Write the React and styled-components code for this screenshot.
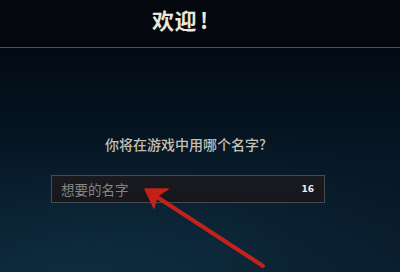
import React from "react";
import styled, { createGlobalStyle } from "styled-components";

const Global = createGlobalStyle`
  html, body { margin: 0; padding: 0; background: #05070f; }
  body { font-family: "Noto Sans CJK SC", "Noto Sans", sans-serif; }
  #root { width: 400px; height: 272px; overflow: hidden; }
`;

const Screen = styled.div`
  position: relative;
  width: 400px;
  height: 272px;
  display: flex;
  flex-direction: column;
  overflow: hidden;
`;

const Header = styled.header`
  height: 47px;
  flex: none;
  display: flex;
  align-items: center;
  padding-left: 152px;
  background: #05070f;
  border-bottom: 1px solid #4d5053;
  box-sizing: content-box;
`;

const Title = styled.h1`
  margin: 0;
  margin-top: -10px;
  font-size: 22px;
  line-height: 26px;
  font-weight: 700;
  color: #ece7da;
  letter-spacing: 0.5px;
`;

const Bang = styled.span`
  margin-left: 3px;
`;

const Main = styled.main`
  flex: 1;
  display: flex;
  flex-direction: column;
  padding: 86px 0 0 51px;
  background:
    radial-gradient(ellipse 35px 4px at 45px 229px, rgba(90, 140, 170, 0.28), transparent 100%),
    radial-gradient(ellipse 240px 150px at 60px 240px, rgba(18, 58, 80, 0.55), transparent 100%),
    radial-gradient(ellipse 200px 120px at 230px 200px, rgba(16, 50, 70, 0.35), transparent 100%),
    linear-gradient(180deg, #030b15 0%, #061725 50%, #0a1e2e 100%);
`;

const Question = styled.p`
  margin: 0 0 21px 54px;
  font-size: 14px;
  line-height: 20px;
  font-weight: 500;
  color: #c3c1b6;
`;

const Field = styled.label`
  width: 274px;
  height: 28px;
  box-sizing: border-box;
  display: flex;
  align-items: center;
  justify-content: space-between;
  padding: 0 10px 0 9px;
  border: 1px solid #464b50;
  background: linear-gradient(180deg, #1a1b21 0%, #15171c 100%);
`;

const Placeholder = styled.span`
  font-size: 13.5px;
  line-height: 18px;
  color: #858683;
`;

const Counter = styled.span`
  font-family: "DejaVu Sans", "Noto Sans", sans-serif;
  font-size: 9px;
  font-weight: 700;
  color: #ececec;
`;

const Annotation = styled.svg`
  position: absolute;
  left: 0;
  top: 0;
  pointer-events: none;
`;

export default function App() {
  return (
    <>
      <Global />
      <Screen>
        <Header>
          <Title>
            欢迎<Bang>!</Bang>
          </Title>
        </Header>
        <Main>
          <Question>你将在游戏中用哪个名字?</Question>
          <Field>
            <Placeholder>想要的名字</Placeholder>
            <Counter>16</Counter>
          </Field>
        </Main>
        <Annotation width="400" height="272" viewBox="0 0 400 272">
          <line
            x1="263"
            y1="266"
            x2="154"
            y2="195"
            stroke="#c4211a"
            strokeWidth="4"
            strokeLinecap="round"
          />
          <polygon
            points="145,189 168,189 157,196 154,208"
            fill="#c4211a"
            stroke="#c4211a"
            strokeWidth="1.5"
            strokeLinejoin="round"
          />
        </Annotation>
      </Screen>
    </>
  );
}
